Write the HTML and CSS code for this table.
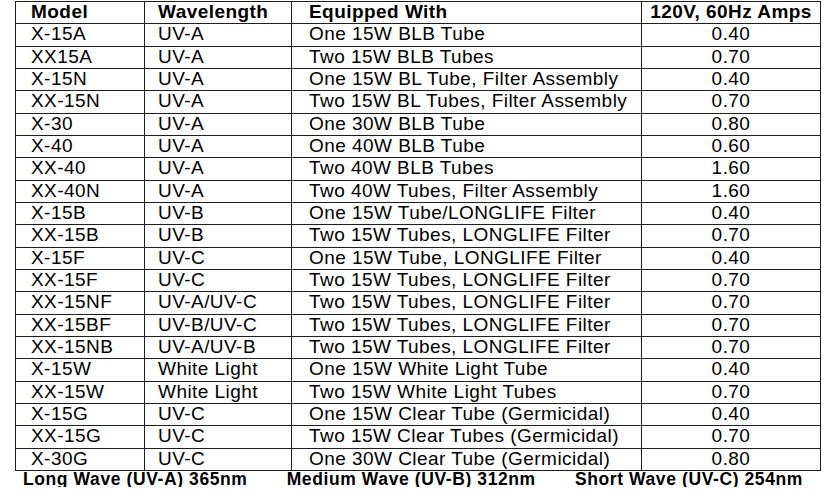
FILE: index.html
```html
<!DOCTYPE html>
<html lang="en">
<head>
<meta charset="utf-8">
<title>Lamp models</title>
<link rel="stylesheet" href="styles.css">
</head>
<body>
<div class="page">
  <table class="spec">
    <colgroup>
      <col class="c-model">
      <col class="c-wave">
      <col class="c-equip">
      <col class="c-amps">
    </colgroup>
    <thead>
      <tr>
        <th class="col-model">Model</th>
        <th class="col-wave">Wavelength</th>
        <th class="col-equip">Equipped With</th>
        <th class="col-amps">120V, 60Hz Amps</th>
      </tr>
    </thead>
    <tbody>
      <tr><td class="col-model">X-15A</td><td class="col-wave">UV-A</td><td class="col-equip">One 15W BLB Tube</td><td class="col-amps">0.40</td></tr>
      <tr><td class="col-model">XX15A</td><td class="col-wave">UV-A</td><td class="col-equip">Two 15W BLB Tubes</td><td class="col-amps">0.70</td></tr>
      <tr><td class="col-model">X-15N</td><td class="col-wave">UV-A</td><td class="col-equip">One 15W BL Tube, Filter Assembly</td><td class="col-amps">0.40</td></tr>
      <tr><td class="col-model">XX-15N</td><td class="col-wave">UV-A</td><td class="col-equip">Two 15W BL Tubes, Filter Assembly</td><td class="col-amps">0.70</td></tr>
      <tr><td class="col-model">X-30</td><td class="col-wave">UV-A</td><td class="col-equip">One 30W BLB Tube</td><td class="col-amps">0.80</td></tr>
      <tr><td class="col-model">X-40</td><td class="col-wave">UV-A</td><td class="col-equip">One 40W BLB Tube</td><td class="col-amps">0.60</td></tr>
      <tr><td class="col-model">XX-40</td><td class="col-wave">UV-A</td><td class="col-equip">Two 40W BLB Tubes</td><td class="col-amps">1.60</td></tr>
      <tr><td class="col-model">XX-40N</td><td class="col-wave">UV-A</td><td class="col-equip">Two 40W Tubes, Filter Assembly</td><td class="col-amps">1.60</td></tr>
      <tr><td class="col-model">X-15B</td><td class="col-wave">UV-B</td><td class="col-equip">One 15W Tube/LONGLIFE Filter</td><td class="col-amps">0.40</td></tr>
      <tr><td class="col-model">XX-15B</td><td class="col-wave">UV-B</td><td class="col-equip">Two 15W Tubes, LONGLIFE Filter</td><td class="col-amps">0.70</td></tr>
      <tr><td class="col-model">X-15F</td><td class="col-wave">UV-C</td><td class="col-equip">One 15W Tube, LONGLIFE Filter</td><td class="col-amps">0.40</td></tr>
      <tr><td class="col-model">XX-15F</td><td class="col-wave">UV-C</td><td class="col-equip">Two 15W Tubes, LONGLIFE Filter</td><td class="col-amps">0.70</td></tr>
      <tr><td class="col-model">XX-15NF</td><td class="col-wave">UV-A/UV-C</td><td class="col-equip">Two 15W Tubes, LONGLIFE Filter</td><td class="col-amps">0.70</td></tr>
      <tr><td class="col-model">XX-15BF</td><td class="col-wave">UV-B/UV-C</td><td class="col-equip">Two 15W Tubes, LONGLIFE Filter</td><td class="col-amps">0.70</td></tr>
      <tr><td class="col-model">XX-15NB</td><td class="col-wave">UV-A/UV-B</td><td class="col-equip">Two 15W Tubes, LONGLIFE Filter</td><td class="col-amps">0.70</td></tr>
      <tr><td class="col-model">X-15W</td><td class="col-wave">White Light</td><td class="col-equip">One 15W White Light Tube</td><td class="col-amps">0.40</td></tr>
      <tr><td class="col-model">XX-15W</td><td class="col-wave">White Light</td><td class="col-equip">Two 15W White Light Tubes</td><td class="col-amps">0.70</td></tr>
      <tr><td class="col-model">X-15G</td><td class="col-wave">UV-C</td><td class="col-equip">One 15W Clear Tube (Germicidal)</td><td class="col-amps">0.40</td></tr>
      <tr><td class="col-model">XX-15G</td><td class="col-wave">UV-C</td><td class="col-equip">Two 15W Clear Tubes (Germicidal)</td><td class="col-amps">0.70</td></tr>
      <tr><td class="col-model">X-30G</td><td class="col-wave">UV-C</td><td class="col-equip">One 30W Clear Tube (Germicidal)</td><td class="col-amps">0.80</td></tr>
    </tbody>
  </table>
  <div class="legend">
    <span class="legend-item">Long Wave (UV-A) 365nm</span>
    <span class="legend-item">Medium Wave (UV-B) 312nm</span>
    <span class="legend-item">Short Wave (UV-C) 254nm</span>
  </div>
</div>
</body>
</html>
```

FILE: styles.css
```css
html, body {
  margin: 0;
  padding: 0;
  background: #ffffff;
}

body {
  font-family: "Liberation Sans", Arial, sans-serif;
  color: #000;
}

.page {
  width: 832px;
  padding: 1px 0 0 15px;
  box-sizing: border-box;
}

.spec {
  border-collapse: collapse;
  table-layout: fixed;
  width: 805px;
  font-size: 19px;
  letter-spacing: 0.45px;
  border: 1.5px solid #3a3a3a;
}

.c-model { width: 129px; }
.c-wave { width: 147px; }
.c-equip { width: 350px; }
.c-amps { width: 179px; }

.spec tr {
  height: 22.33px;
}

.spec th,
.spec td {
  border: 1px solid #1e1e1e;
  padding: 1px 0 0 0;
  line-height: 18px;
  vertical-align: top;
  white-space: nowrap;
  text-align: left;
}

.spec th {
  font-weight: bold;
}

.spec .col-model { padding-left: 15px; }
.spec .col-wave { padding-left: 13px; }
.spec .col-equip { padding-left: 17px; }
.spec .col-amps { text-align: center; }

.legend {
  display: flex;
  justify-content: space-between;
  width: 780px;
  padding-left: 8px;
  font-size: 17.5px;
  line-height: 16px;
  font-weight: bold;
  letter-spacing: 0.6px;
  white-space: nowrap;
}
```
